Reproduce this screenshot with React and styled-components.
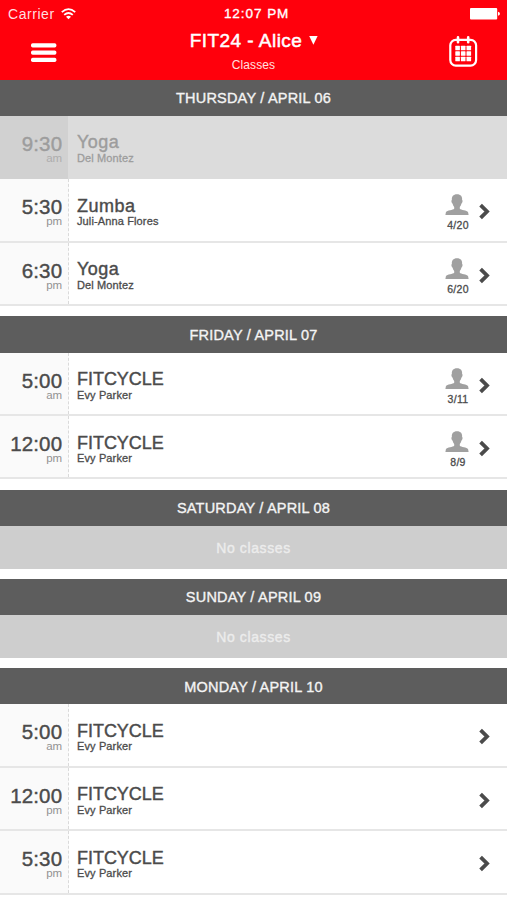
import React from 'react';
import styled, { createGlobalStyle } from 'styled-components';

const GlobalStyle = createGlobalStyle`
  * { box-sizing: border-box; }
  body {
    margin: 0;
    background: #fff;
    font-family: "Liberation Sans", Arial, sans-serif;
    overflow: hidden;
  }
`;

const Screen = styled.main`
  width: 507px;
  height: 900px;
  overflow: hidden;
  background: #fff;
`;

const Header = styled.header`
  height: 79.5px;
  background: #ff000c;
  color: #fff;
`;

const StatusBar = styled.div`
  display: grid;
  grid-template-columns: 1fr auto 1fr;
  align-items: center;
  height: 27px;
  padding: 0 7px 0 8px;
`;

const Carrier = styled.div`
  display: flex;
  align-items: center;
  gap: 6px;
  font-size: 14px;
  letter-spacing: 0.55px;
  color: #ffdfe0;
`;

const Clock = styled.div`
  font-size: 13.5px;
  letter-spacing: 0.95px;
  -webkit-text-stroke: 0.35px #fff;
  transform: translateX(2.6px);
`;

const Battery = styled.svg`
  justify-self: end;
`;

const NavBar = styled.div`
  display: grid;
  grid-template-columns: 90px 1fr 90px;
  height: 52px;
`;

const NavButton = styled.button`
  display: flex;
  align-items: flex-start;
  padding: ${(p) => p.$pad};
  border: 0;
  background: none;
  color: #fff;
`;

const Heading = styled.div`
  display: flex;
  flex-direction: column;
  align-items: center;
`;

const Title = styled.div`
  display: flex;
  align-items: center;
  gap: 7px;
  height: 24px;
  margin-top: 2px;
  padding-left: 1px;
  font-size: 19px;
  letter-spacing: 0.46px;
  white-space: nowrap;
  -webkit-text-stroke: 0.5px #fff;
`;

const Subtitle = styled.div`
  margin-top: 5px;
  font-size: 12px;
  line-height: 14px;
  letter-spacing: 0.1px;
  color: #ffe0e0;
`;

const Day = styled.section`
  margin-bottom: 10.2px;
`;

const DayTitle = styled.h2`
  display: flex;
  align-items: center;
  justify-content: center;
  height: 36.4px;
  margin: 0;
  padding-top: 1px;
  background: #5d5d5d;
  color: #f4f4f4;
  font-size: 14.5px;
  font-weight: 400;
  letter-spacing: 0.2px;
  -webkit-text-stroke: 0.35px #f4f4f4;
`;

const Row = styled.div`
  display: flex;
  height: 63.4px;
  background: ${(p) => (p.$past ? '#dcdcdc' : 'linear-gradient(#e6e6e6, #e6e6e6) bottom / 100% 2px no-repeat #fff')};
  color: ${(p) => (p.$past ? '#9d9d9d' : '#4b4b4b')};
`;

const TimeCell = styled.div`
  display: flex;
  flex-direction: column;
  align-items: flex-end;
  width: 69.4px;
  height: ${(p) => (p.$past ? '63.4px' : '61.4px')};
  padding: 16px 6.2px 0 0;
  border-right: ${(p) => (p.$past ? '1px solid #dcdcdc' : '1px dashed #dadada')};
  background: ${(p) => (p.$past ? '#d1d1d1' : '#fafafa')};
`;

const Time = styled.div`
  height: 20px;
  font-size: 20.5px;
  line-height: 24px;
  letter-spacing: 0.15px;
  -webkit-text-stroke: 0.4px currentColor;
`;

const Meridiem = styled.div`
  font-size: 11.5px;
  line-height: 13px;
  color: ${(p) => (p.$past ? '#adadad' : '#929292')};
`;

const Details = styled.div`
  flex: 1;
  padding: 16.5px 0 0 7.6px;
`;

const ClassName = styled.div`
  height: 19.5px;
  font-size: 18px;
  line-height: 21px;
  letter-spacing: ${(p) => p.$spacing};
  -webkit-text-stroke: 0.4px currentColor;
`;

const Instructor = styled.div`
  font-size: 11px;
  line-height: 12px;
  letter-spacing: 0.13px;
  -webkit-text-stroke: 0.3px currentColor;
`;

const Attendance = styled.div`
  display: flex;
  flex-direction: column;
  align-items: center;
  width: 30px;
  margin-right: 7px;
  padding-top: 15px;
  font-size: 10.5px;
  line-height: 14px;
  letter-spacing: 0.3px;
  -webkit-text-stroke: 0.3px currentColor;
`;

const Spots = styled.span`
  margin-top: 2px;
  padding-left: 2px;
`;

const ChevronCell = styled.div`
  width: 28px;
  padding-top: 24px;
`;

const Empty = styled.div`
  display: flex;
  align-items: center;
  justify-content: center;
  height: 42.6px;
  padding-top: 1px;
  background: #cecece;
  color: #ececec;
  font-size: 14px;
  letter-spacing: 0.6px;
  -webkit-text-stroke: 0.4px #ececec;
`;

const WifiIcon = () => (
  <svg width="15" height="12" viewBox="0 0 15 12" fill="none" stroke="#fff" strokeWidth="1.8">
    <path d="M.8 4.2Q7.5-1.9 14.2 4.2M3.2 6.9Q7.5 3.2 11.8 6.9" />
    <path d="M5 8.8Q7.5 6.8 10 8.8L7.5 11.3Z" fill="#fff" stroke="none" />
  </svg>
);

const BatteryIcon = () => (
  <Battery width="30" height="12" viewBox="0 0 30 12" fill="#fff">
    <rect x="0" y="0" width="27.2" height="11.6" rx="1" />
    <path d="M28 3.8Q30 4.4 30 5.8T28 7.8Z" />
  </Battery>
);

const MenuIcon = () => (
  <svg width="26" height="20" viewBox="0 0 26 20" fill="#fff">
    <rect y="0.2" width="25.4" height="4.2" rx="1.7" />
    <rect y="7.5" width="25.4" height="4.2" rx="1.7" />
    <rect y="14.8" width="25.4" height="4.2" rx="1.7" />
  </svg>
);

const CalendarIcon = () => (
  <svg width="29" height="31" viewBox="0 0 29 31" fill="none" stroke="#fff">
    <rect x="1.3" y="3.8" width="25.8" height="25.8" rx="5.5" strokeWidth="2.2" />
    <path d="M9 1.4V6.2M19.2 1.4V6.2" strokeWidth="2.6" strokeLinecap="round" />
    <g fill="#fff" stroke="none">
      {[0, 1, 2].map((r) =>
        [0, 1, 2].map((c) => (
          <rect key={`${r}-${c}`} x={6.3 + c * 5.6} y={9.7 + r * 5.5} width="4.6" height="4.5" rx="0.5" />
        ))
      )}
    </g>
  </svg>
);

const CaretIcon = () => (
  <svg width="9" height="11" viewBox="0 0 9 11" fill="#fff">
    <path d="M.2 0H8.6L4.4 8.8Z" />
  </svg>
);

const PersonIcon = () => (
  <svg width="24" height="22" viewBox="0 0 24 22" fill="#a0a0a0">
    <path d="M12 .3C8.2.3 6.5 2.6 6.9 6C6 6.1 6.5 9.1 7.5 9.5C7.9 11 8.4 12.1 9.2 12.9V14.8C8.2 16.3 2 16 .9 18.2L.4 21H23.6L23.1 18.2C22 16 15.8 16.3 14.8 14.8V12.9C15.6 12.1 16.1 11 16.5 9.5C17.5 9.1 18 6.1 17.1 6C17.5 2.6 15.8.3 12 .3Z" />
  </svg>
);

const ChevronIcon = () => (
  <svg width="12" height="17" viewBox="0 0 12 17" fill="none" stroke="#4b4b4b" strokeWidth="3.8">
    <path d="M1.6 2.2L8 8.5L1.6 14.8" />
  </svg>
);

const schedule = [
  {
    title: 'THURSDAY / APRIL 06',
    classes: [
      { time: '9:30', half: 'am', name: 'Yoga', teacher: 'Del Montez', past: true },
      { time: '5:30', half: 'pm', name: 'Zumba', teacher: 'Juli-Anna Flores', spots: '4/20' },
      { time: '6:30', half: 'pm', name: 'Yoga', teacher: 'Del Montez', spots: '6/20' },
    ],
  },
  {
    title: 'FRIDAY / APRIL 07',
    classes: [
      { time: '5:00', half: 'am', name: 'FITCYCLE', teacher: 'Evy Parker', spots: '3/11' },
      { time: '12:00', half: 'pm', name: 'FITCYCLE', teacher: 'Evy Parker', spots: '8/9' },
    ],
  },
  { title: 'SATURDAY / APRIL 08', classes: [] },
  { title: 'SUNDAY / APRIL 09', classes: [] },
  {
    title: 'MONDAY / APRIL 10',
    classes: [
      { time: '5:00', half: 'am', name: 'FITCYCLE', teacher: 'Evy Parker' },
      { time: '12:00', half: 'pm', name: 'FITCYCLE', teacher: 'Evy Parker' },
      { time: '5:30', half: 'pm', name: 'FITCYCLE', teacher: 'Evy Parker' },
    ],
  },
];

const ClassRow = ({ time, half, name, teacher, spots, past }) => (
  <Row $past={past}>
    <TimeCell $past={past}>
      <Time>{time}</Time>
      <Meridiem $past={past}>{half}</Meridiem>
    </TimeCell>
    <Details>
      <ClassName $spacing={name === 'FITCYCLE' ? '-0.03px' : '0.5px'}>{name}</ClassName>
      <Instructor>{teacher}</Instructor>
    </Details>
    {spots && (
      <Attendance>
        <PersonIcon />
        <Spots>{spots}</Spots>
      </Attendance>
    )}
    {!past && (
      <ChevronCell>
        <ChevronIcon />
      </ChevronCell>
    )}
  </Row>
);

export default function App() {
  return (
    <>
      <GlobalStyle />
      <Screen>
        <Header>
          <StatusBar>
            <Carrier>
              Carrier
              <WifiIcon />
            </Carrier>
            <Clock>12:07 PM</Clock>
            <BatteryIcon />
          </StatusBar>
          <NavBar>
            <NavButton $pad="15.5px 0 0 31px" aria-label="Menu">
              <MenuIcon />
            </NavButton>
            <Heading>
              <Title>
                FIT24 - Alice
                <CaretIcon />
              </Title>
              <Subtitle>Classes</Subtitle>
            </Heading>
            <NavButton $pad="9px 0 0 32px" aria-label="Calendar">
              <CalendarIcon />
            </NavButton>
          </NavBar>
        </Header>
        {schedule.map(({ title, classes }) => (
          <Day key={title}>
            <DayTitle>{title}</DayTitle>
            {classes.length ? (
              classes.map((item) => <ClassRow key={item.time} {...item} />)
            ) : (
              <Empty>No classes</Empty>
            )}
          </Day>
        ))}
      </Screen>
    </>
  );
}
